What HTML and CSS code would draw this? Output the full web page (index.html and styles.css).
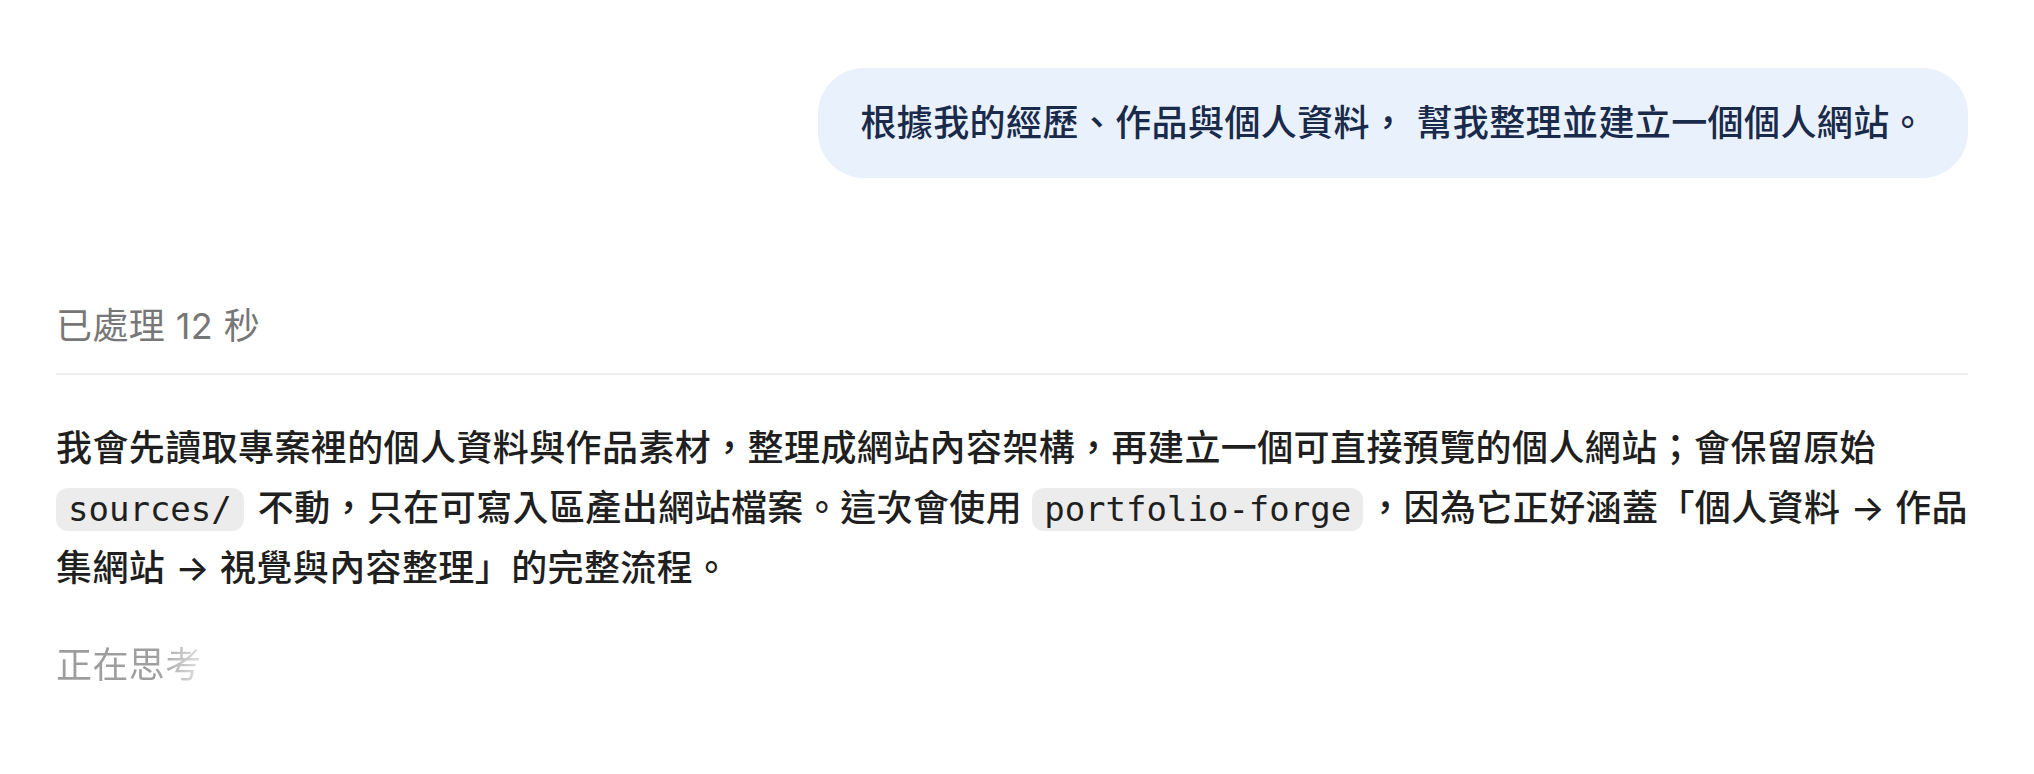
FILE: index.html
```html
<!DOCTYPE html>
<html lang="zh-Hant">
<head>
<meta charset="utf-8">
<title>Chat</title>
<link rel="stylesheet" href="styles.css">
</head>
<body>
<main class="thread">
  <div class="user-row">
    <div class="bubble">根據我的經歷、作品與個人資料， 幫我整理並建立一個個人網站。</div>
  </div>
  <section class="reply">
    <div class="elapsed">已處理 12 秒</div>
    <p class="answer">我會先讀取專案裡的個人資料與作品素材，整理成網站內容架構，再建立一個可直接預覽的個人網站；會保留原始 <code class="code">sources/</code> 不動，只在可寫入區產出網站檔案。這次會使用 <code class="code">portfolio-forge</code>，因為它正好涵蓋「個人資料 → 作品集網站 → 視覺與內容整理」的完整流程。</p>
    <div class="thinking"><span class="shimmer">正在思考</span></div>
  </section>
</main>
</body>
</html>
```

FILE: styles.css
```css
html, body {
  margin: 0;
  padding: 0;
  background: #ffffff;
}

body {
  font-family: Inter, "Noto Sans CJK TC", sans-serif;
  font-size: 36px;
  line-height: 60px;
  letter-spacing: 0.4px;
  color: #1f1f1f;
}

.thread {
  padding: 68px 66px 0 56px;
}

.user-row {
  display: flex;
  justify-content: flex-end;
}

.bubble {
  background: #e9f1fd;
  color: #1a2a4a;
  font-weight: 500;
  padding: 25px 42px;
  border-radius: 46px;
}

.reply {
  margin-top: 118px;
}

.elapsed {
  color: #777777;
  padding-bottom: 17px;
  border-bottom: 2px solid #ececec;
}

.answer {
  margin: 43px 0 0 0;
  font-weight: 500;
  color: #1f1f1f;
}

.code {
  display: inline-block;
  font-family: "DejaVu Sans Mono", monospace;
  font-size: 34px;
  line-height: 39px;
  font-weight: 400;
  letter-spacing: 0;
  background: #ececec;
  color: #1f1f1f;
  border-radius: 12px;
  padding: 2px 12px;
  margin-right: 4px;
}

.thinking {
  margin-top: 37px;
}

.shimmer {
  display: inline-block;
  background: linear-gradient(90deg, #9c9c9c 0%, #9f9f9f 68%, #e2e2e2 100%);
  -webkit-background-clip: text;
  background-clip: text;
  color: transparent;
}
```
